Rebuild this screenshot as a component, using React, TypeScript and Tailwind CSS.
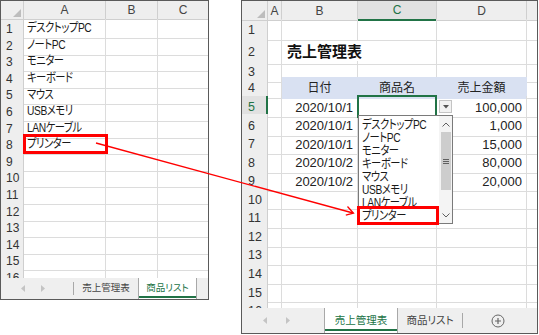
import * as React from "react";

const leftItems = [
  "デスクトップPC",
  "ノートPC",
  "モニター",
  "キーボード",
  "マウス",
  "USBメモリ",
  "LANケーブル",
  "プリンター",
];

const sales = [
  { date: "2020/10/1", amount: "100,000" },
  { date: "2020/10/1", amount: "1,000" },
  { date: "2020/10/1", amount: "15,000" },
  { date: "2020/10/2", amount: "80,000" },
  { date: "2020/10/2", amount: "20,000" },
];

function Corner() {
  return (
    <svg className="absolute right-[2px] bottom-[2px]" width="8" height="8" viewBox="0 0 8 8">
      <polygon points="8,0 8,8 0,8" fill="#bdbdbd" />
    </svg>
  );
}

function SmallArrows({ gap }: { gap: string }) {
  return (
    <div className={"flex items-center " + gap}>
      <svg width="4" height="7" viewBox="0 0 4 7">
        <polygon points="4,0 4,7 0,3.5" fill="#c4c4c4" />
      </svg>
      <svg width="4" height="7" viewBox="0 0 4 7">
        <polygon points="0,0 0,7 4,3.5" fill="#c4c4c4" />
      </svg>
    </div>
  );
}

// condensed text, like the proportional Gothic face in the sheet
function Narrow({ children }: { children: React.ReactNode }) {
  return (
    <span className="inline-block origin-left scale-x-[0.82] tracking-[-0.5px] whitespace-nowrap [font-feature-settings:'palt']">
      {children}
    </span>
  );
}

function LeftSheet() {
  const rows = Array.from({ length: 16 }, (_, i) => i + 1);
  return (
    <div className="relative flex h-[300px] w-[209px] shrink-0 flex-col overflow-hidden border border-[#5a5a5a] bg-white">
      <div className="grid h-[18px] shrink-0 grid-cols-[23px_82px_52px_50px] text-[12px] text-[#444]">
        <div className="relative border-r border-b border-[#cfcfcf] bg-[#eeeeee]">
          <Corner />
        </div>
        <div className="flex items-center justify-center border-r border-b border-[#cfcfcf] bg-[#eeeeee]">A</div>
        <div className="flex items-center justify-center border-r border-b border-[#cfcfcf] bg-[#eeeeee]">B</div>
        <div className="flex items-center justify-center border-b border-[#cfcfcf] bg-[#eeeeee]">C</div>
      </div>
      <div className="flex-1 overflow-hidden">
        {rows.map((n) => (
          <div key={n} className="grid h-[16.6px] grid-cols-[23px_82px_52px_50px]">
            <div className="flex items-center border-r border-b border-[#cfcfcf] bg-[#eeeeee] pt-px pl-[5px] text-[12px] text-[#333]">
              {n}
            </div>
            <div className="flex items-center overflow-hidden border-r border-b border-[#dcdcdc] pl-[3px] text-[12.5px] text-[#1a1a1a]">
              {leftItems[n - 1] ? <Narrow>{leftItems[n - 1]}</Narrow> : null}
            </div>
            <div className="border-r border-b border-[#dcdcdc]" />
            <div className="border-b border-[#dcdcdc]" />
          </div>
        ))}
      </div>
      <div className="flex h-[21px] shrink-0 bg-[#efefef] text-[9.5px]">
        <div className="flex w-[72px] items-center pl-[20px]">
          <SmallArrows gap="gap-[16px]" />
        </div>
        <div className="my-[4px] w-px bg-[#a8a8a8]" />
        <div className="flex w-[64px] items-center justify-center text-[#444]">売上管理表</div>
        <div className="relative flex w-[59px] items-center justify-center border-x border-[#a8a8a8] bg-white text-[#217346] [font-feature-settings:'palt']">
          商品リスト
          <div className="absolute right-0 bottom-[1px] left-0 h-[2px] bg-[#217346]" />
        </div>
      </div>
      <div className="pointer-events-none absolute top-[133px] left-[22px] h-[20px] w-[85px] border-[3px] border-[#ff0000]" />
    </div>
  );
}

const rightHeights = ["h-[20px]", "h-[22px]", "h-[16px]"];

function RightSheet() {
  const rows = Array.from({ length: 16 }, (_, i) => i + 1);
  return (
    <div className="relative flex h-[334px] w-[297px] shrink-0 flex-col overflow-hidden border border-[#5a5a5a] bg-white">
      <div className="grid h-[18px] shrink-0 grid-cols-[26px_14px_76px_79px_90px_10px] text-[12px] text-[#444]">
        <div className="relative border-r border-b border-[#cfcfcf] bg-[#eeeeee]">
          <Corner />
        </div>
        <div className="flex items-center justify-center border-r border-b border-[#cfcfcf] bg-[#eeeeee]">A</div>
        <div className="flex items-center justify-center border-r border-b border-[#cfcfcf] bg-[#eeeeee]">B</div>
        <div className="flex items-center justify-center border-r border-b-2 border-r-[#cfcfcf] border-b-[#217346] bg-[#e1e1e1] text-[#217346]">
          C
        </div>
        <div className="flex items-center justify-center border-r border-b border-[#cfcfcf] bg-[#eeeeee]">D</div>
        <div className="border-b border-[#cfcfcf] bg-[#eeeeee]" />
      </div>
      <div className="flex-1 overflow-hidden">
        {rows.map((n) => {
          const h = rightHeights[n - 1] ?? "h-[18.6px]";
          const sale = n >= 5 && n <= 9 ? sales[n - 5] : null;
          return (
            <div key={n} className={"grid grid-cols-[26px_14px_76px_79px_90px_10px] " + h}>
              {n === 5 ? (
                <div className="flex items-center border-r-2 border-b border-r-[#217346] border-b-[#cfcfcf] bg-[#e1e1e1] pt-[2px] pl-[6px] text-[12.5px] text-[#217346]">
                  {n}
                </div>
              ) : (
                <div className="flex items-center border-r border-b border-[#cfcfcf] bg-[#eeeeee] pt-[2px] pl-[6px] text-[12.5px] text-[#333]">
                  {n}
                </div>
              )}
              <div className="border-r border-b border-[#dcdcdc]" />
              {n === 2 ? (
                <div className="flex items-center overflow-visible border-b border-[#dcdcdc] pt-[2px] pl-[5px] text-[15px] font-bold whitespace-nowrap text-[#111]">
                  売上管理表
                </div>
              ) : n === 4 ? (
                <div className="flex items-center justify-center border-r border-b border-[#d9e1f2] bg-[#d9e1f2] pt-[2px] text-[12px] text-[#222]">
                  日付
                </div>
              ) : (
                <div className="flex items-center justify-end overflow-hidden border-r border-b border-[#dcdcdc] pt-[2px] pr-[4px] text-[13px] whitespace-nowrap text-[#222]">
                  {sale ? sale.date : ""}
                </div>
              )}
              {n === 4 ? (
                <div className="flex items-center justify-center border-r border-b border-[#d9e1f2] bg-[#d9e1f2] pt-[2px] text-[12px] text-[#222]">
                  商品名
                </div>
              ) : n === 5 ? (
                <div className="relative border-r border-b border-[#dcdcdc]">
                  <div className="absolute -top-px -right-px -bottom-px -left-px border-2 border-[#217346]" />
                  <div className="absolute -right-[3px] -bottom-[3px] h-[5px] w-[5px] border border-white bg-[#217346]" />
                </div>
              ) : (
                <div className="border-r border-b border-[#dcdcdc]" />
              )}
              {n === 4 ? (
                <div className="flex items-center justify-center border-r border-b border-[#d9e1f2] bg-[#d9e1f2] pt-[2px] text-[12px] text-[#222]">
                  売上金額
                </div>
              ) : (
                <div className="flex items-center justify-end border-r border-b border-[#dcdcdc] pt-[2px] pr-[4px] text-[13px] text-[#222]">
                  {sale ? sale.amount : ""}
                </div>
              )}
              <div className="border-b border-[#dcdcdc]" />
            </div>
          );
        })}
      </div>
      <div className="flex h-[25px] shrink-0 bg-[#efefef] text-[10.5px]">
        <div className="flex w-[82px] items-center pl-[21px]">
          <SmallArrows gap="gap-[19px]" />
        </div>
        <div className="relative flex w-[73px] items-center justify-center border-l border-[#a8a8a8] bg-white text-[#217346]">
          売上管理表
          <div className="absolute right-0 bottom-[2px] left-0 h-[2px] bg-[#217346]" />
        </div>
        <div className="flex w-[65px] items-center justify-center border-l border-[#a8a8a8] text-[#444] [font-feature-settings:'palt']">
          商品リスト
        </div>
        <div className="my-[5px] w-px bg-[#a8a8a8]" />
        <div className="flex flex-1 items-center pl-[28px]">
          <svg width="14" height="14" viewBox="0 0 14 14">
            <circle cx="7" cy="7" r="6" fill="none" stroke="#666" strokeWidth="1" />
            <path d="M7 4v6M4 7h6" stroke="#666" strokeWidth="1.2" />
          </svg>
        </div>
      </div>

      {/* dropdown button */}
      <div className="absolute top-[99px] left-[197px] flex h-[13px] w-[13px] items-center justify-center border border-[#c4c4c4] bg-[#f2f2f2]">
        <svg width="6" height="4" viewBox="0 0 6 4">
          <polygon points="0,0 6,0 3,3.5" fill="#555" />
        </svg>
      </div>

      {/* dropdown list */}
      <div className="absolute top-[114px] left-[116px] flex h-[109px] w-[95px] border border-[#7a7a7a] bg-white">
        <div className="flex flex-1 flex-col overflow-hidden pt-[3px] pl-[3px]">
          {leftItems.map((t) => (
            <div key={t} className="flex h-[13px] shrink-0 items-center text-[12.5px] leading-[13px] text-[#1a1a1a]">
              <Narrow>{t}</Narrow>
            </div>
          ))}
        </div>
        <div className="flex w-[13px] flex-col items-center bg-[#f4f4f4]">
          <div className="flex h-[16px] items-center justify-center">
            <svg width="8" height="5" viewBox="0 0 8 5">
              <polyline points="0.5,4.5 4,1 7.5,4.5" fill="none" stroke="#606060" strokeWidth="1" />
            </svg>
          </div>
          <div className="flex h-[58px] w-[10px] items-center justify-center bg-[#cdcdcd]">
            <svg width="6" height="5" viewBox="0 0 6 5">
              <path d="M0 0.5h6M0 2.5h6M0 4.5h6" stroke="#606060" strokeWidth="1" />
            </svg>
          </div>
          <div className="flex-1" />
          <div className="flex h-[16px] items-center justify-center">
            <svg width="8" height="5" viewBox="0 0 8 5">
              <polyline points="0.5,0.5 4,4 7.5,0.5" fill="none" stroke="#606060" strokeWidth="1" />
            </svg>
          </div>
        </div>
      </div>

      <div className="pointer-events-none absolute top-[205px] left-[115px] h-[19px] w-[82px] border-[3px] border-[#ff0000]" />
    </div>
  );
}

export default function App() {
  return (
    <div className="relative flex h-[335px] w-[539px] items-start gap-[32px] bg-white font-['Liberation_Sans','Noto_Sans_CJK_JP',sans-serif]">
      <LeftSheet />
      <RightSheet />
      <svg className="pointer-events-none absolute inset-0" width="539" height="335" viewBox="0 0 539 335">
        <line x1="96" y1="143" x2="353" y2="213" stroke="#ff0000" strokeWidth="1.3" />
        <polyline points="347.5,206.5 353.5,213.2 345.8,215.2" fill="none" stroke="#ff0000" strokeWidth="1.3" />
      </svg>
    </div>
  );
}
